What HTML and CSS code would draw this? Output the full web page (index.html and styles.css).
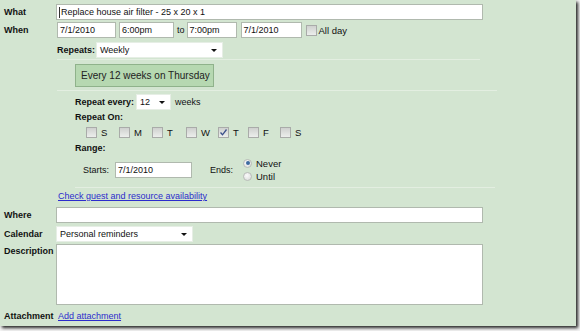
FILE: index.html
```html
<!DOCTYPE html>
<html>
<head>
<meta charset="utf-8">
<link rel="stylesheet" href="styles.css">
</head>
<body>
<div class="panel">
  <div class="row r-what">
    <span class="lbl">What</span>
    <span class="field wide"><span class="caret"></span>Replace house air filter - 25 x 20 x 1</span>
  </div>
  <div class="row r-when">
    <span class="lbl">When</span>
    <span class="field d1">7/1/2010</span>
    <span class="field t1">6:00pm</span>
    <span class="to">to</span>
    <span class="field t2">7:00pm</span>
    <span class="field d2">7/1/2010</span>
    <span class="cb"></span>
    <span class="allday">All day</span>
  </div>

  <div class="repeat">
    <div class="row r-repeats">
      <span class="b">Repeats:</span>
      <span class="select s-weekly">Weekly<span class="arrow"></span></span>
    </div>
    <div class="rule rule1"></div>
    <div class="summary">Every 12 weeks on Thursday</div>
    <div class="rule rule2"></div>
    <div class="row r-every">
      <span class="b">Repeat every:</span>
      <span class="select s-num">12<span class="arrow"></span></span>
      <span class="weeks">weeks</span>
    </div>
    <div class="b head-on">Repeat On:</div>
    <div class="days">
      <span class="day"><span class="cb"></span>S</span>
      <span class="day"><span class="cb"></span>M</span>
      <span class="day"><span class="cb"></span>T</span>
      <span class="day"><span class="cb"></span>W</span>
      <span class="day"><span class="cb checked"><svg width="9" height="9" viewBox="0 0 9 9"><path d="M1.5 4.5 L3.5 6.8 L7.5 1.5" fill="none" stroke="#3a4f8a" stroke-width="1.3"/></svg></span>T</span>
      <span class="day"><span class="cb"></span>F</span>
      <span class="day"><span class="cb"></span>S</span>
    </div>
    <div class="b head-range">Range:</div>
    <div class="range">
      <span class="starts">Starts:</span>
      <span class="field start-in">7/1/2010</span>
      <span class="ends">Ends:</span>
      <span class="radios">
        <span class="opt"><span class="radio on"></span>Never</span>
        <span class="opt"><span class="radio"></span>Until</span>
      </span>
    </div>
    <div class="rule rule3"></div>
  </div>

  <a class="link check" href="#">Check guest and resource availability</a>

  <div class="row r-where">
    <span class="lbl">Where</span>
    <span class="field wide"></span>
  </div>
  <div class="row r-cal">
    <span class="lbl">Calendar</span>
    <span class="select s-cal">Personal reminders<span class="arrow"></span></span>
  </div>
  <div class="row r-desc">
    <span class="lbl">Description</span>
    <span class="field area"></span>
  </div>
  <div class="row r-att">
    <span class="lbl">Attachment</span>
    <a class="link" href="#">Add attachment</a>
  </div>
</div>
</body>
</html>
```
FILE: styles.css
```css
html, body {
  margin: 0;
  padding: 0;
  background: #f4f4f4;
}
body {
  font-family: "Liberation Sans", Arial, sans-serif;
  font-size: 9px;
  color: #111;
  width: 580px;
  height: 331px;
  overflow: hidden;
}
.panel {
  width: 576px;
  height: 326px;
  box-sizing: border-box;
  background: #d3e5d1;
  padding: 4px 0 0 4px;
  box-shadow: 2px 2px 3px 0 rgba(0, 0, 0, 0.85);
}
.row {
  display: flex;
  align-items: center;
}
.lbl {
  width: 52px;
  flex: none;
  font-weight: bold;
}
.b {
  font-weight: bold;
}
.field {
  box-sizing: border-box;
  height: 16px;
  border: 1px solid #b0b9ae;
  background: #fff;
  padding: 0 2px;
  line-height: 14px;
  white-space: nowrap;
  flex: none;
  display: flex;
  align-items: center;
}
.caret {
  display: inline-block;
  width: 1px;
  height: 11px;
  background: #333;
  margin-right: 1px;
}
.wide {
  width: 427px;
}
.r-when {
  margin-top: 2px;
}
.r-when .d1 { width: 59px; margin-left: 1px; }
.r-when .t1 { width: 55px; margin-left: 3px; }
.r-when .to { margin: 0 2px 0 3px; }
.r-when .t2 { width: 50px; }
.r-when .d2 { width: 61px; margin-left: 4px; }
.r-when .cb { margin-left: 4px; width: 11px; height: 11px; }
.allday { margin-left: 2px; font-size: 9.5px; }

.cb {
  box-sizing: border-box;
  display: inline-flex;
  align-items: center;
  justify-content: center;
  width: 11px;
  height: 11px;
  border: 1px solid #a9aba9;
  background: linear-gradient(#cfd1cf, #eceeec);
  flex: none;
}

.repeat {
  margin-left: 71px;
}
.r-repeats {
  margin: 4px 0 0 -18px;
}
.select {
  box-sizing: border-box;
  position: relative;
  height: 16px;
  background: #fff;
  border: 1px solid #e6eee5;
  line-height: 14px;
  padding-left: 3px;
  flex: none;
}
.arrow {
  position: absolute;
  right: 5px;
  top: 6px;
  width: 0;
  height: 0;
  border-left: 3px solid transparent;
  border-right: 3px solid transparent;
  border-top: 3px solid #111;
}
.s-weekly {
  width: 127px;
  margin-left: 1px;
}
.rule {
  height: 1px;
  background: #e3eee1;
}
.rule1 {
  margin: 1px 0 0 -18px;
  width: 423px;
}
.summary {
  box-sizing: border-box;
  margin-top: 4px;
  width: 139px;
  height: 23px;
  background: #b6d8b1;
  border: 1px solid #8fb28b;
  font-size: 10px;
  line-height: 21px;
  padding-left: 5px;
  color: #222;
}
.rule2 {
  margin: 3px 0 0 -18px;
  width: 440px;
}
.r-every {
  margin-top: 3px;
}
.s-num {
  width: 35px;
  margin-left: 2px;
}
.weeks {
  margin-left: 4px;
}
.head-on {
  margin-top: 2px;
  height: 11px;
  line-height: 11px;
}
.days {
  margin: 3px 0 0 11px;
  display: grid;
  grid-template-columns: 33px 33px 34px 32px 30px 32px auto;
  height: 12px;
  align-items: center;
}
.day {
  display: flex;
  align-items: center;
  gap: 4px;
  font-size: 9.5px;
}
.head-range {
  margin-top: 5px;
  height: 11px;
  line-height: 11px;
}
.range {
  margin-top: 4px;
  display: flex;
  align-items: center;
  height: 23px;
}
.starts {
  margin-left: 8px;
  width: 32px;
}
.start-in {
  width: 77px;
}
.ends {
  margin-left: 18px;
  width: 30px;
}
.radios {
  display: flex;
  flex-direction: column;
  gap: 3px;
  margin-left: 3px;
}
.opt {
  display: flex;
  align-items: center;
  gap: 4px;
  height: 10px;
  font-size: 9.5px;
}
.radio {
  box-sizing: border-box;
  width: 9px;
  height: 9px;
  border-radius: 50%;
  border: 1px solid #b9bcb9;
  background: radial-gradient(circle at 40% 35%, #fafafa, #d8dad8);
  position: relative;
  flex: none;
}
.radio.on::after {
  content: "";
  position: absolute;
  left: 1.5px;
  top: 1.5px;
  width: 4px;
  height: 4px;
  border-radius: 50%;
  background: #3d6aa0;
}
.rule3 {
  margin: 6px 0 0 0;
  width: 420px;
}
.link {
  color: #2c2ccc;
  text-decoration: underline;
}
.check {
  display: block;
  margin: 3px 0 0 54px;
  height: 11px;
  line-height: 11px;
}
.r-where {
  margin-top: 5px;
}
.r-cal {
  margin-top: 3px;
}
.s-cal {
  width: 137px;
}
.r-desc {
  margin-top: 2px;
  align-items: flex-start;
}
.r-desc .lbl {
  margin-top: 2px;
}
.area {
  width: 427px;
  height: 61px;
}
.r-att {
  margin-top: 6px;
}
.r-att .link {
  margin-left: 2px;
}
```
